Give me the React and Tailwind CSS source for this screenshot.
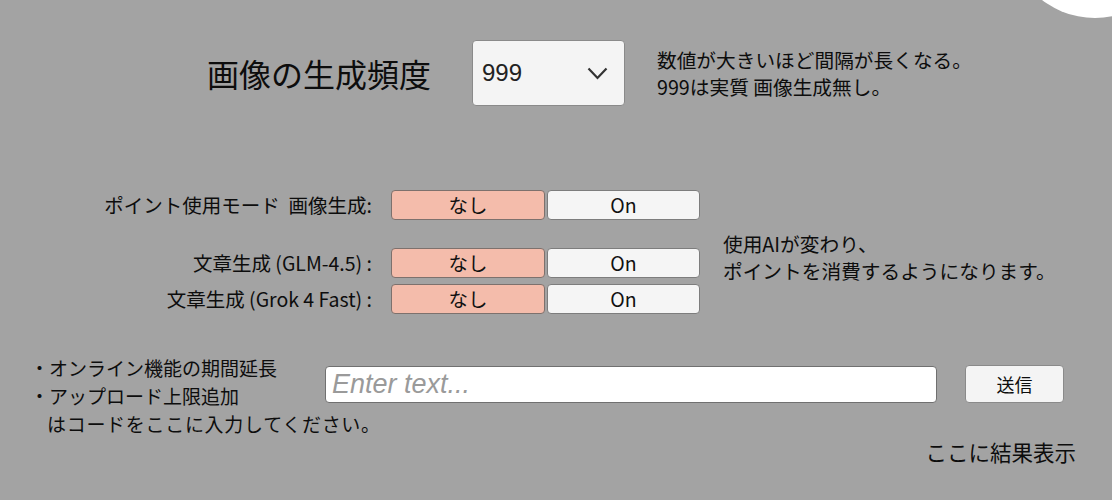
const Toggle = () => (
    <div className="flex gap-[2px]">
        <div className="w-[154px] h-[30px] flex items-center justify-center bg-[#f4bcab] border border-[#7d716d] rounded-[4px] text-[19.5px] text-[#111]">なし</div>
        <div className="w-[153px] h-[30px] flex items-center justify-center bg-[#f5f5f5] border border-[#7d7d7d] rounded-[4px] text-[19.5px] text-[#111]">On</div>
    </div>
)

const App = () => {
    return (
        <div className="relative w-[1112px] h-[500px] overflow-hidden bg-[#a3a3a3] text-[#0d0d0d] font-['Noto_Sans_CJK_JP',sans-serif]">
            <div className="absolute left-[1008px] top-[-156px] w-[174px] h-[174px] rounded-full bg-white" />

            {/* frequency */}
            <div className="flex items-center pl-[207px] pt-[40px]">
                <div className="w-[265px] text-[32px] leading-[40px]">画像の生成頻度</div>
                <div className="w-[153px] h-[66px] flex items-center justify-between pl-[9px] pr-[16px] bg-[#f4f4f4] border border-[#8a8a8a] rounded-[4px]">
                    <span className="text-[24px] text-[#222] font-['Liberation_Sans',sans-serif]">999</span>
                    <svg width="21" height="13" viewBox="0 0 21 13" fill="none" stroke="#333" strokeWidth="2.2">
                        <polyline points="1.5,1.5 10.5,11 19.5,1.5" />
                    </svg>
                </div>
                <div className="ml-[32px] text-[19.7px] leading-[27px] whitespace-nowrap">
                    <p>数値が大きいほど間隔が長くなる。</p>
                    <p>999は実質 画像生成無し。</p>
                </div>
            </div>

            {/* point mode */}
            <div className="flex mt-[84px]">
                <div className="flex flex-col">
                    <div className="flex items-center">
                        <div className="w-[372px] text-right text-[19.5px] whitespace-nowrap">ポイント使用モード&nbsp;&nbsp;画像生成:</div>
                        <div className="ml-[19px]"><Toggle /></div>
                    </div>
                    <div className="flex items-center mt-[28px]">
                        <div className="w-[372px] text-right text-[19.5px] whitespace-nowrap">文章生成 (GLM-4.5) :</div>
                        <div className="ml-[19px]"><Toggle /></div>
                    </div>
                    <div className="flex items-center mt-[6px]">
                        <div className="w-[372px] text-right text-[19.5px] whitespace-nowrap">文章生成 (Grok 4 Fast) :</div>
                        <div className="ml-[19px]"><Toggle /></div>
                    </div>
                </div>
                <div className="ml-[23px] mt-[40px] text-[19.7px] leading-[27px] whitespace-nowrap">
                    <p>使用AIが変わり、</p>
                    <p>ポイントを消費するようになります。</p>
                </div>
            </div>

            {/* code input */}
            <div className="flex items-start pl-[30px] mt-[40px]">
                <div className="w-[295px] text-[19px] leading-[28px] whitespace-nowrap">
                    <p>・オンライン機能の期間延長</p>
                    <p>・アップロード上限追加</p>
                    <p className="pl-[17px] tracking-[0.7px]">はコードをここに入力してください。</p>
                </div>
                <div className="w-[612px] h-[37px] mt-[12px] flex items-center px-[6px] bg-white border border-[#707070] rounded-[4px]">
                    <span className="text-[27px] italic text-[#9a9a9a] font-['Liberation_Sans',sans-serif]">Enter text...</span>
                </div>
                <div className="ml-[28px] mt-[11px] w-[99px] h-[38px] flex items-center justify-center bg-[#f4f4f4] border border-[#8a8a8a] rounded-[4px] text-[18px]">送信</div>
            </div>

            <div className="text-right pr-[36px] text-[21.5px] leading-[28px] whitespace-nowrap">ここに結果表示</div>
        </div>
    )
}

export default App
